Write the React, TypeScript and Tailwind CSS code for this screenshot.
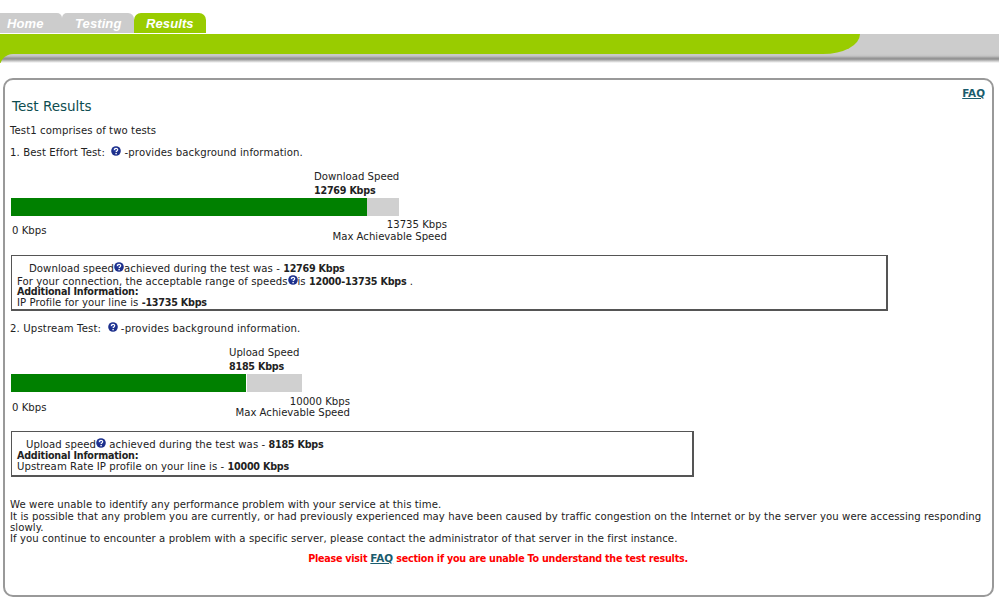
import React from "react";

const Help = ({ className = "" }: { className?: string }) => (
  <svg viewBox="0 0 10 10" className={`inline-block w-[10px] h-[10px] align-[0px] ${className}`}>
    <circle cx="5" cy="5" r="4.8" fill="#1c2f8c" />
    <circle cx="4" cy="3.6" r="2" fill="#4a62c0" opacity="0.6" />
    <path d="M3.4 3.9c0-2.1 3.3-2.1 3.3-.2 0 1.2-1.6 1.2-1.6 2.4" fill="none" stroke="#fff" strokeWidth="1.2" />
    <rect x="4.4" y="6.9" width="1.4" height="1.4" fill="#fff" />
  </svg>
);

const Faq = () => <a className="font-bold underline text-[#1a5c6e] text-[10.4px] tracking-normal">FAQ</a>;
const B = ({ children }: { children: React.ReactNode }) => <b className="text-[9.6px] tracking-[-0.22px]">{children}</b>;

export default function App() {
  return (
    <div className="w-[999px] h-[600px] bg-white overflow-hidden font-['DejaVu_Sans',Verdana,sans-serif] text-[10.15px] leading-[11px] text-[#222]">
      <div className="flex pt-[13px] h-[33px] font-['Liberation_Sans',Arial,sans-serif] text-[13px] font-bold italic text-white tracking-[0.1px] leading-[22px]">
        <div className="w-[62px] h-[20px] bg-[#cccccc] rounded-tr-[5px] pl-[7px]">Home</div>
        <div className="w-[72px] h-[20px] bg-[#cccccc] rounded-tl-[5px] rounded-tr-[6px] pl-[13px]">Testing</div>
        <div className="w-[72px] h-[20px] bg-[#99cc00] rounded-t-[7px] pl-[12px]">Results</div>
      </div>
      <div className="h-[1px] bg-white" />
      <div className="h-[20px] bg-[#cccccc]">
        <div className="w-[860px] h-[20px] bg-[#99cc00] rounded-br-[37px_20px]" />
      </div>
      <div className="h-[13px] bg-[#99cc00]">
        <div className="h-[13px] rounded-tl-[24px] pt-[9px] bg-[linear-gradient(#cccccc_0,#c4c4c4_2px,#999999_4px,#8f8f8f_5px,#c8c8c8_7px,#ffffff_9px)]">
          <div className="h-[4px] bg-white" />
        </div>
      </div>

      <div className="ml-[3px] mt-[11px] w-[991px] h-[519px] border-2 border-[#999999] rounded-[10px] relative pl-[5px] pr-[6px]">
        <div className="absolute right-[7px] top-[8px]"><Faq /></div>
        <div className="pt-[18px] pl-[2px] text-[13.5px] leading-[16px] text-[#0d4d50]">Test Results</div>
        <div className="mt-[11px] tracking-[0.08px]">Test1 comprises of two tests</div>
        <div className="mt-[10px] tracking-[0.1px]">1. Best Effort Test: <Help className="ml-[3px]" /> -provides background information.</div>

        <div className="mt-[13px] ml-[1px] w-[436px]">
          <div className="pl-[303px]">Download Speed</div>
          <div className="pl-[303px] mt-[3px]"><B>12769 Kbps</B></div>
          <div className="mt-[2px] flex h-[18px] w-[388px]">
            <div className="w-[356px] bg-[#008000]" />
            <div className="w-[32px] bg-[#d0d0d0]" />
          </div>
          <div className="flex justify-between mt-[3px]">
            <div className="pl-[1px] pt-[6px]">0 Kbps</div>
            <div className="text-right">
              <div>13735 Kbps</div>
              <div className="mt-[1px]">Max Achievable Speed</div>
            </div>
          </div>
        </div>

        <div className="mt-[13px] ml-[1px] w-[877px] h-[56px] border-2 border-t-1 border-l-1 border-[#555555] pl-[5px] pt-[6px] tracking-[0.06px]">
          <div className="pl-[12px] h-[13px]">Download speed<Help />achieved during the test was - <B>12769 Kbps</B></div>
          <div className="h-[11px]">For your connection, the acceptable range of speeds<Help />is <B>12000-13735 Kbps</B> .</div>
          <div className="h-[11px]"><B>Additional Information:</B></div>
          <div>IP Profile for your line is <B>-13735 Kbps</B></div>
        </div>

        <div className="mt-[11px] tracking-[0.14px]">2. Upstream Test: <Help className="ml-[3px]" /> -provides background information.</div>

        <div className="mt-[13px] ml-[1px] w-[339px]">
          <div className="pl-[218px]">Upload Speed</div>
          <div className="pl-[218px] mt-[3px]"><B>8185 Kbps</B></div>
          <div className="mt-[2px] flex h-[18px] w-[291px]">
            <div className="w-[235px] bg-[#008000]" />
            <div className="w-[55px] ml-[1px] bg-[#d0d0d0]" />
          </div>
          <div className="flex justify-between mt-[4px]">
            <div className="pl-[1px] pt-[6px]">0 Kbps</div>
            <div className="text-right">
              <div>10000 Kbps</div>
              <div>Max Achievable Speed</div>
            </div>
          </div>
        </div>

        <div className="mt-[13px] ml-[1px] w-[683px] h-[46px] border-2 border-t-1 border-l-1 border-[#555555] pl-[5px] pt-[6px] tracking-[0.06px]">
          <div className="pl-[9px] h-[12px]">Upload speed<Help /> achieved during the test was - <B>8185 Kbps</B></div>
          <div className="h-[11px]"><B>Additional Information:</B></div>
          <div>Upstream Rate IP profile on your line is - <B>10000 Kbps</B></div>
        </div>

        <div className="mt-[22px] tracking-[0.07px]">
          <div>We were unable to identify any performance problem with your service at this time.</div>
          <div className="mt-[1px]">It is possible that any problem you are currently, or had previously experienced may have been caused by traffic congestion on the Internet or by the server you were accessing responding slowly.</div>
          <div>If you continue to encounter a problem with a specific server, please contact the administrator of that server in the first instance.</div>
        </div>

        <div className="mt-[9px] text-center">
          <span className="font-bold text-[9.6px] tracking-[-0.24px] text-[#ff0000]">Please visit <Faq /> section if you are unable To understand the test results.</span>
        </div>
      </div>
    </div>
  );
}
